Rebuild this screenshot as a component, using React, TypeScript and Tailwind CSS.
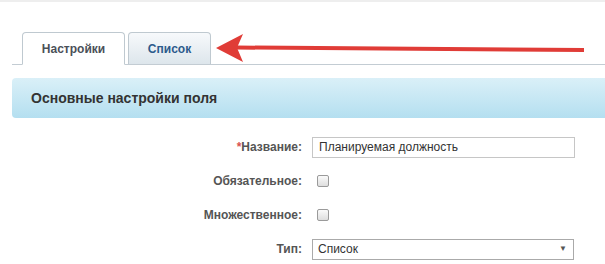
import React from 'react';

const labelCls = 'w-[312px] shrink-0 pr-[10px] text-right text-[12px] font-bold text-[#555]';

const Row: React.FC<{ label: React.ReactNode; children: React.ReactNode }> = ({ label, children }) => (
  <div className="flex h-[34px] items-center">
    <div className={labelCls}>{label}</div>
    <div className="flex items-center">{children}</div>
  </div>
);

const Checkbox: React.FC = () => (
  <span className="ml-[5px] block h-[12px] w-[12px] rounded-[2px] border border-[#9a9a9a] bg-gradient-to-b from-[#fafafa] to-[#dedede]" />
);

const App: React.FC = () => {
  return (
    <div
      className="relative h-[264px] w-[605px] overflow-hidden bg-white"
      style={{ fontFamily: '"Liberation Sans", Arial, sans-serif' }}
    >
      <div className="h-[2px] bg-[#eeeeee]" />

      <div className="pl-[12px]">
        {/* tabs */}
        <div className="mt-[30px] flex border-b border-[#c3ccd3] pl-[10px]">
          <div className="-mb-px flex h-[33px] w-[103px] items-center justify-center rounded-t-[4px] border border-b-white border-[#bfc9d0] bg-white text-[12px] font-bold text-[#4b5058]">
            Настройки
          </div>
          <div className="ml-[3px] flex h-[32px] w-[83px] items-center justify-center rounded-t-[4px] border border-b-0 border-[#bfc9d0] bg-gradient-to-b from-[#f7f9fb] to-[#dde6ec] text-[12px] font-bold text-[#2c5b8c]">
            Список
          </div>
        </div>

        {/* section header */}
        <div className="mt-[13px] flex h-[40px] items-center rounded-l-[4px] bg-gradient-to-b from-[#daf0f8] to-[#b4dff0] pl-[19px] text-[14px] font-bold text-[#333]">
          Основные настройки поля
        </div>
      </div>

      {/* form */}
      <div className="mt-[12px] flex flex-col">
        <Row
          label={
            <>
              <span className="text-[#d9534f]">*</span>Название:
            </>
          }
        >
          <div className="flex h-[21px] w-[263px] items-center border border-[#c6c6c6] px-[6px] text-[12px] text-[#333]">
            Планируемая должность
          </div>
        </Row>
        <Row label="Обязательное:">
          <Checkbox />
        </Row>
        <Row label="Множественное:">
          <Checkbox />
        </Row>
        <Row label="Тип:">
          <div className="flex h-[21px] w-[262px] items-center justify-between border border-[#aaaaaa] pl-[5px] pr-[6px] text-[12px] text-[#333]">
            <span>Список</span>
            <span className="text-[8px] text-[#555]">▼</span>
          </div>
        </Row>
      </div>

      {/* red arrow annotation */}
      <svg className="absolute left-0 top-0" width="605" height="264" viewBox="0 0 605 264">
        <line x1="237" y1="47.5" x2="584" y2="50" stroke="#e03c37" strokeWidth="4" />
        <polygon points="216,48 243,34 237,47.7 243,62" fill="#e03c37" />
      </svg>
    </div>
  );
};

export default App;
